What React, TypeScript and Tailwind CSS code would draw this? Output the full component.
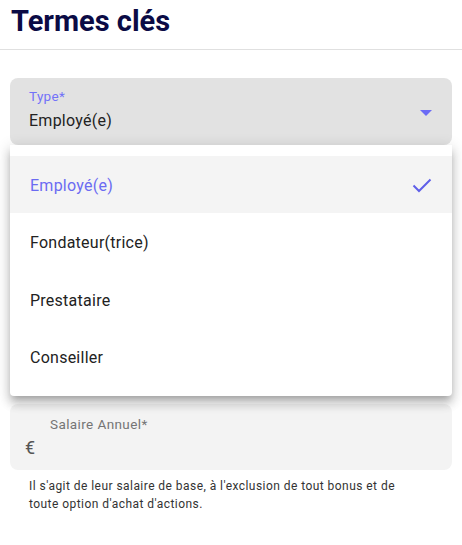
import React from "react";

export default function App() {
  const items = ["Employé(e)", "Fondateur(trice)", "Prestataire", "Conseiller"];
  return (
    <div className="w-[462px] h-[545px] bg-white overflow-hidden" style={{ fontFamily: "Roboto, 'Liberation Sans', sans-serif" }}>
      <div className="h-[50px] border-b border-[#e0e0e0] px-[11px] pt-[2px]">
        <h1 className="text-[29px] leading-[38px] font-bold text-[#0b0b45]">Termes clés</h1>
      </div>
      <div className="px-[10px] pt-[28px]">
        <div className="relative">
          <div className="h-[67px] rounded-[8px] bg-[#e2e2e2] pl-[19px] pr-[20px] flex items-center">
            <div className="flex-1">
              <div className="text-[13.5px] leading-[15px] tracking-[0.3px] text-[#7272f9] mt-[-3px]">Type*</div>
              <div className="text-[16px] leading-[22px] tracking-[0.25px] text-[#222] mt-[6px]">Employé(e)</div>
            </div>
            <svg width="12" height="6" viewBox="0 0 12 6" className="mt-[3px]">
              <path d="M0 0 L12 0 L6 6 Z" fill="#6b6bf5" />
            </svg>
          </div>
          <div className="absolute left-0 right-0 top-[67px] z-10 bg-white rounded-b-[4px] pt-[11px] pb-[11px] shadow-[0_5px_6px_-3px_rgba(0,0,0,0.2),0_8px_10px_1px_rgba(0,0,0,0.14),0_3px_14px_2px_rgba(0,0,0,0.12)]">
            {items.map((it, i) => (
              <div
                key={it}
                className={
                  "h-[57.33px] flex items-center pl-[20px] pr-[20px] pt-[3px] text-[16px] tracking-[0.25px] " +
                  (i === 0 ? "bg-[#f4f4f4] text-[#6b6bf2]" : "text-[#222]")
                }
              >
                <span className="flex-1">{it}</span>
                {i === 0 && (
                  <svg width="24" height="24" viewBox="0 0 24 24" className="mr-[-2px] mt-[-3px]">
                    <path d="M3.5 12.5 L9 18 L20.5 6.5" fill="none" stroke="#5f5fe8" strokeWidth="2" />
                  </svg>
                )}
              </div>
            ))}
          </div>
        </div>
        <div className="h-[259px]" />
        <div className="h-[66px] rounded-[8px] bg-[#f3f3f3] pl-[15px] pt-[12px]">
          <div className="pl-[25px] text-[13.5px] leading-[16px] tracking-[0.4px] text-[#757575]">Salaire Annuel*</div>
          <div className="text-[18px] leading-[24px] text-[#555] mt-[4px]">€</div>
        </div>
        <p className="mt-[7px] pl-[19px] pr-[40px] text-[12px] leading-[18px] tracking-[0.45px] text-[#333]">
          Il s'agit de leur salaire de base, à l'exclusion de tout bonus et de toute option d'achat d'actions.
        </p>
      </div>
    </div>
  );
}
